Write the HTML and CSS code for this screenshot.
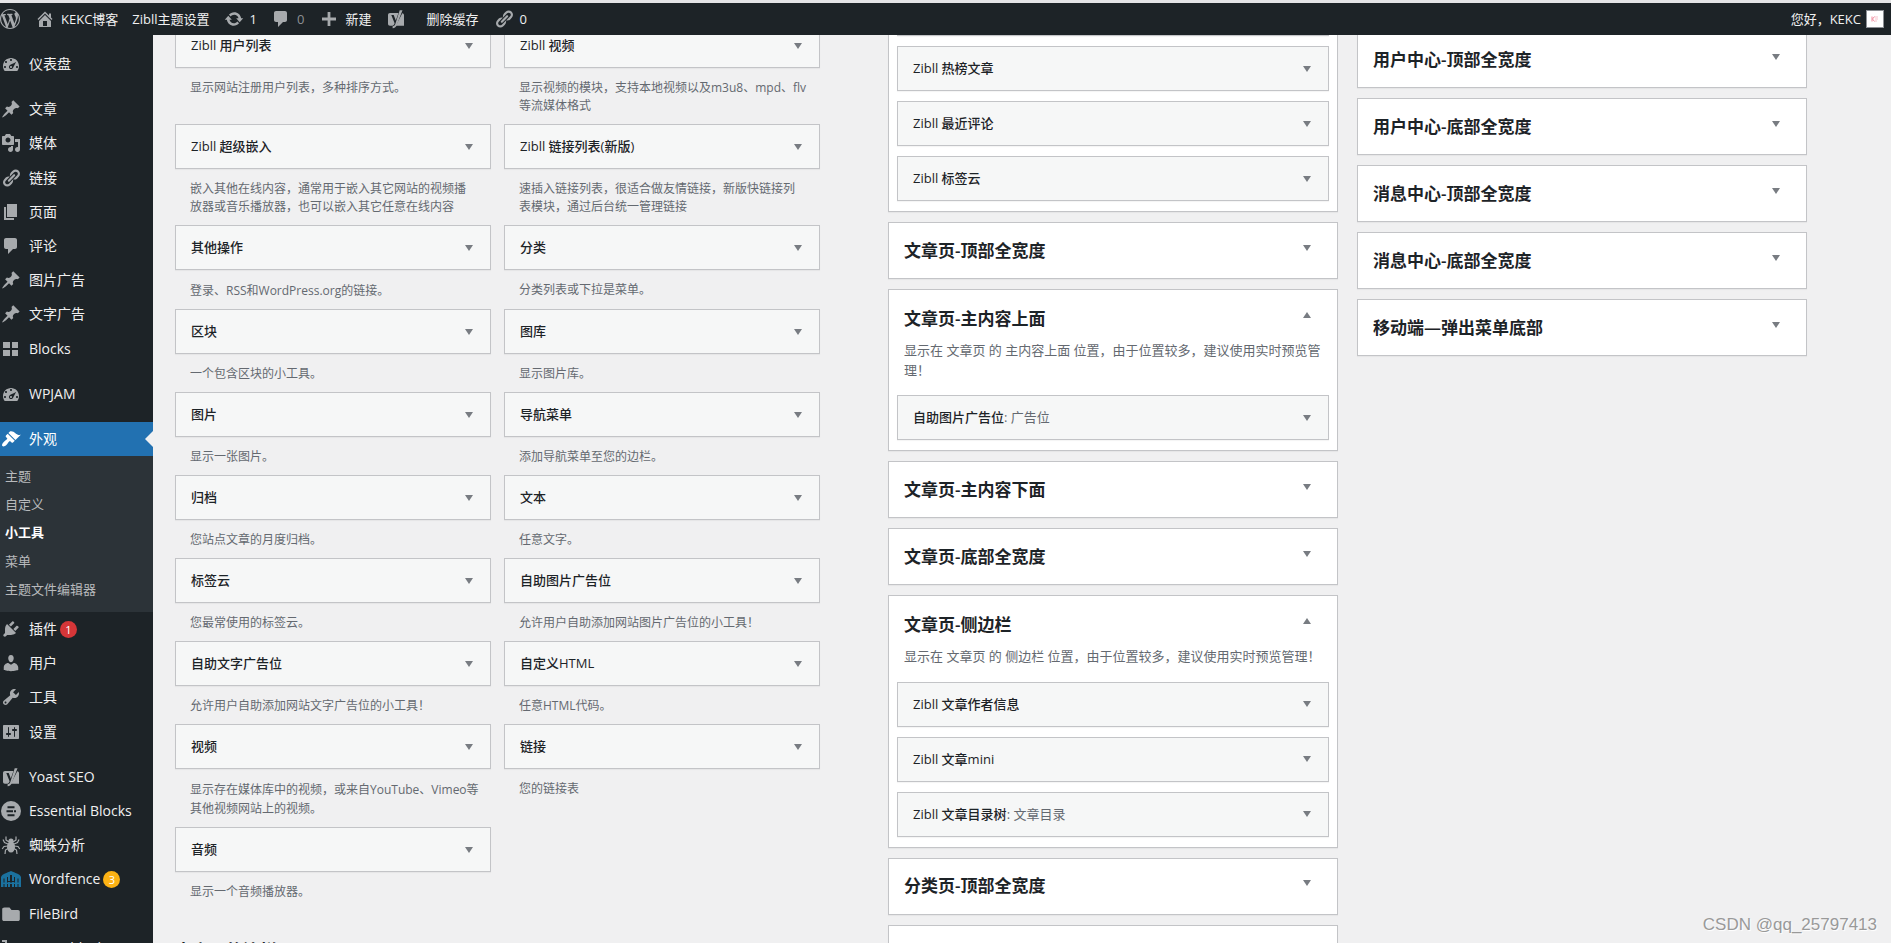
FILE: index.html
```html
<!DOCTYPE html>
<html lang="zh-CN">
<head>
<meta charset="utf-8">
<title>小工具 ‹ KEKC博客 — WordPress</title>
<link rel="stylesheet" href="styles.css">
</head>
<body>
<svg class="sprite" aria-hidden="true">
  <symbol id="i-wp" viewBox="0 0 20 20"><path d="M20 10c0-5.51-4.49-10-10-10C4.48 0 0 4.49 0 10c0 5.52 4.48 10 10 10 5.51 0 10-4.48 10-10zM7.78 15.37L4.37 6.22c.55-.02 1.17-.08 1.17-.08.5-.06.44-1.13-.06-1.11 0 0-1.45.11-2.37.11-.18 0-.37 0-.58-.01C4.12 2.69 6.87 1.11 10 1.11c2.33 0 4.45.87 6.05 2.34-.68-.11-1.65.39-1.65 1.58 0 .74.45 1.36.9 2.1.35.61.55 1.36.55 2.46 0 1.49-1.4 5-1.4 5l-3.03-8.37c.54-.02.82-.17.82-.17.5-.05.44-1.25-.06-1.22 0 0-1.44.12-2.38.12-.87 0-2.33-.12-2.33-.12-.5-.03-.56 1.2-.06 1.22l.92.08 1.26 3.41zM17.41 10c.24-.64.74-1.87.43-4.25.7 1.29 1.05 2.71 1.05 4.25 0 3.29-1.73 6.24-4.4 7.78.97-2.59 1.94-5.2 2.92-7.78zM6.1 18.09C3.12 16.65 1.11 13.53 1.11 10c0-1.3.23-2.48.72-3.59C3.25 10.3 4.67 14.2 6.1 18.09zm4.03-6.63l2.58 6.98c-.86.29-1.76.45-2.71.45-.79 0-1.57-.11-2.29-.33.81-2.38 1.62-4.74 2.42-7.1z"/></symbol>
  <symbol id="i-home" viewBox="0 0 20 20"><path d="M16 8.5l1.53 1.53-1.06 1.06L10 4.6l-6.47 6.49-1.06-1.06L10 2.5l4 4v-2h2v4zm-6-2.46l6 5.99V18H4v-5.97zM12 17v-5H8v5h4z"/></symbol>
  <symbol id="i-update" viewBox="0 0 20 20"><path d="M10.2 3.28c3.53 0 6.43 2.61 6.92 6h2.08l-3.5 4-3.5-4h2.32c-.45-1.97-2.21-3.45-4.32-3.45-1.45 0-2.73.71-3.54 1.78L4.95 5.66C6.23 4.2 8.11 3.28 10.2 3.28zm-.4 13.44c-3.52 0-6.43-2.61-6.92-6H.8l3.5-4c1.17 1.33 2.33 2.67 3.5 4H5.48c.45 1.97 2.21 3.45 4.32 3.45 1.45 0 2.73-.71 3.54-1.78l1.71 1.95c-1.28 1.46-3.15 2.38-5.25 2.38z"/></symbol>
  <symbol id="i-comment" viewBox="0 0 20 20"><path d="M5 2h9c1.1 0 2 .9 2 2v7c0 1.1-.9 2-2 2h-2l-5 5v-5H5c-1.1 0-2-.9-2-2V4c0-1.1.9-2 2-2z"/></symbol>
  <symbol id="i-plus" viewBox="0 0 20 20"><path d="M17 9v2.400h-5.600V17H8.600v-5.600H3V8.600h5.600V3h2.800v5.600H17z"/></symbol>
  <symbol id="i-yoast" viewBox="0 0 20 20"><path d="M4 4h8.500l-2.700 7.500L7.700 6H5.300l3.300 8.300c-.5 1.500-1.200 2.300-2.300 2.500H4c-1.300 0-2-.8-2-2V6c0-1.300.8-2 2-2zM16.300 4.200c1.200.2 1.700.9 1.700 2v10.600H9.600c.8-.8 1.300-1.700 1.800-3z"/><path d="M13.700 1.200h2.800L10.900 15.800c-.9 2.200-2 3.300-4.300 3.400v-1.900c1.700-.2 2.300-1 2.800-2.600z"/></symbol>
  <symbol id="i-link" viewBox="0 0 20 20"><path d="M17.740 2.760c1.680 1.690 1.680 4.410 0 6.100l-1.530 1.520c-1.120 1.120-2.700 1.470-4.140 1.090l2.620-2.610.76-.77.76-.76c.84-.84.84-2.200 0-3.040-.84-.85-2.200-.85-3.040 0l-.77.76-3.380 3.380c-.37-1.440-.02-3.020 1.100-4.140l1.520-1.530c1.690-1.680 4.420-1.680 6.100 0zM8.590 13.430l5.340-5.340c.42-.42.42-1.100 0-1.520-.44-.43-1.130-.39-1.530 0l-5.330 5.340c-.42.42-.42 1.100 0 1.520.44.430 1.130.390 1.520 0zm-.76 2.290l4.140-4.150c.38 1.440.03 3.020-1.090 4.140l-1.520 1.530c-1.690 1.680-4.410 1.680-6.100 0-1.680-1.680-1.680-4.420 0-6.100l1.530-1.520c1.120-1.120 2.700-1.470 4.140-1.100l-4.140 4.150c-.85.84-.85 2.200 0 3.050.84.84 2.200.84 3.040 0z"/></symbol>
  <symbol id="i-dash" viewBox="0 0 20 20"><path d="M3.760 17h12.480c1.100-1.370 1.760-3.110 1.760-5 0-4.420-3.580-8-8-8s-8 3.580-8 8c0 1.890.66 3.630 1.760 5zM9 6c0-.55.45-1 1-1s1 .45 1 1c0 .56-.45 1-1 1s-1-.44-1-1zM4 8c0-.55.45-1 1-1s1 .45 1 1c0 .56-.45 1-1 1s-1-.44-1-1zm4.520 3.400c.84-.83 6.510-3.500 6.510-3.500s-2.660 5.680-3.490 6.510c-.84.84-2.180.84-3.020 0-.83-.83-.83-2.180 0-3.010zM3 13c0-.55.45-1 1-1s1 .45 1 1c0 .56-.45 1-1 1s-1-.44-1-1zm6 0c0 .56.45 1 1 1 .56 0 1-.44 1-1 0-.55-.44-1-1-1-.55 0-1 .45-1 1zm6 0c0-.55.45-1 1-1s1 .45 1 1c0 .56-.45 1-1 1s-1-.44-1-1z"/></symbol>
  <symbol id="i-pin" viewBox="0 0 20 20"><path d="M10.440 3.020l1.820-1.820 6.360 6.350-1.830 1.820c-1.050-.68-2.480-.57-3.410.36l-.75.75c-.92.93-1.040 2.350-.35 3.410l-1.830 1.820-2.410-2.410-2.800 2.790c-.42.420-3.380 2.710-3.800 2.290s1.860-3.390 2.280-3.810l2.790-2.790L4.100 9.360l1.830-1.820c1.050.69 2.480.57 3.400-.36l.75-.75c.93-.92 1.050-2.350.36-3.410z"/></symbol>
  <symbol id="i-media" viewBox="0 0 20 20"><path d="M13 11V4c0-.55-.45-1-1-1h-1.670L9 1H5L3.670 3H2c-.55 0-1 .45-1 1v7c0 .55.450 1 1 1h10c.55 0 1-.45 1-1zM7 4.500c1.380 0 2.500 1.120 2.500 2.500S8.380 9.500 7 9.500 4.500 8.380 4.500 7 5.620 4.500 7 4.500zM14 6h5v10.500c0 1.380-1.120 2.500-2.500 2.500S14 17.880 14 16.500s1.120-2.500 2.500-2.500c.17 0 .34.020.5.050V9h-3V6zm-4 8.050V13h2v3.500c0 1.380-1.120 2.500-2.500 2.500S7 17.880 7 16.500 8.120 14 9.500 14c.17 0 .34.020.5.050z"/></symbol>
  <symbol id="i-page" viewBox="0 0 20 20"><path d="M6 2h10v13H6z"/><path d="M3 5h2v11h8v2H3z"/></symbol>
  <symbol id="i-grid" viewBox="0 0 20 20"><path d="M2 3h7v6H2zM11 3h6v6h-6zM2 11h7v6H2zM11 11h6v6h-6z"/></symbol>
  <symbol id="i-brush" viewBox="0 0 20 20"><path d="M14.480 11.060L7.410 3.990l1.500-1.500c.5-.56 2.300-.47 3.510.32 1.210.8 1.430 1.280 2.910 2.100 1.180.64 2.450 1.260 4.450.85zm-.71.71L6.700 4.700 4.930 6.470c-.39.39-.39 1.020 0 1.410l1.060 1.060c.39.39.39 1.030 0 1.420-.6.600-1.430 1.110-2.210 1.690-.35.26-.7.530-1.010.84C1.430 14.230.4 16.080 1.400 17.070c.99 1 2.840-.03 4.180-1.360.31-.31.58-.66.85-1.020.57-.78 1.080-1.610 1.690-2.210.39-.39 1.020-.39 1.410 0l1.060 1.060c.39.39 1.020.39 1.410 0z"/></symbol>
  <symbol id="i-plug" viewBox="0 0 20 20"><path d="M13.110 4.360L9.870 7.600 8 5.730l3.240-3.240c.35-.34 1.050-.2 1.560.32.52.51.66 1.210.31 1.550zm-8 1.770l.91-1.120 9.010 9.010-1.190.84c-.71.71-2.630 1.160-3.820 1.160H6.140L4.900 17.260c-.59.59-1.540.59-2.120 0-.59-.58-.59-1.530 0-2.120l1.240-1.240v-3.880c0-1.130.4-3.190 1.090-3.890zm7.260 3.970l3.240-3.240c.34-.35 1.040-.21 1.550.31.52.51.66 1.210.31 1.550l-3.240 3.250z"/></symbol>
  <symbol id="i-user" viewBox="0 0 20 20"><path d="M10 9.250c-2.270 0-2.730-3.440-2.730-3.440C7 4.020 7.820 2 9.970 2c2.160 0 2.980 2.020 2.710 3.810 0 0-.41 3.440-2.680 3.440zm0 2.570L12.720 10c2.390 0 4.520 2.330 4.520 4.530v2.490s-3.650 1.130-7.240 1.130c-3.650 0-7.240-1.130-7.240-1.130v-2.490c0-2.250 1.940-4.480 4.470-4.480z"/></symbol>
  <symbol id="i-tool" viewBox="0 0 20 20"><path d="M16.680 9.770c-1.340 1.340-3.300 1.670-4.950.99l-5.410 6.520c-.99.99-2.590.99-3.580 0s-.99-2.590 0-3.570l6.520-5.420c-.68-1.650-.35-3.610.99-4.950 1.280-1.280 3.120-1.620 4.720-1.060l-2.890 2.890 2.820 2.820 2.860-2.870c.53 1.580.18 3.390-1.080 4.650zM3.810 16.210c.4.39 1.040.39 1.430 0 .4-.4.4-1.040 0-1.430-.39-.4-1.030-.4-1.430 0-.39.39-.39 1.030 0 1.430z"/></symbol>
  <symbol id="i-set" viewBox="0 0 20 20"><path d="M18 16V4c0-.55-.45-1-1-1H3c-.55 0-1 .45-1 1v12c0 .55.450 1 1 1h14c.55 0 1-.45 1-1zM8 11h1c.55 0 1 .45 1 1s-.45 1-1 1H8v1.500c0 .28-.22.500-.5.500s-.5-.22-.5-.5V13H6c-.55 0-1-.45-1-1s.45-1 1-1h1V5.500c0-.28.22-.5.5-.5s.5.22.5.5V11zm5-2h-1c-.55 0-1-.45-1-1s.45-1 1-1h1V5.500c0-.28.22-.5.5-.5s.5.22.5.5V7h1c.55 0 1 .45 1 1s-.45 1-1 1h-1v5.500c0 .28-.22.500-.5.500s-.5-.22-.5-.5V9z"/></symbol>
  <symbol id="i-eb" viewBox="0 0 20 20"><circle cx="10" cy="10" r="10"/><path class="cut" d="M6.500 5.200h7v2h-7zM5.500 9.200h6.500v2H5.500zM13 9.200h2v2h-2zM6.500 13.200h7v2h-7z"/></symbol>
  <symbol id="i-spider" viewBox="0 0 20 20"><ellipse cx="10" cy="12" rx="4" ry="5.500"/><circle cx="10" cy="6" r="2.600"/><path class="line" d="M8 7L5 5V1.500M12 7l3-2V1.500M7 9L3.500 7.500 2 4.500M13 9l3.500-1.500L18 4.500M7 11l-4 .5L1.200 14M13 11l4 .5 1.800 2.500M7 13.500L4.500 15 4 19M13 13.500l2.500 1.500.5 4"/></symbol>
  <symbol id="i-fence" viewBox="0 0 20 20"><path d="M0 8C1 5.500 3 5 4 4.500 6 3.800 7.500 3 10 2c2.500 1 4 1.800 6 2.500 1 .5 3 1 4 3.500v10h-2.500V9.500h-1V18H14V8h-1v4h-2V6H9v6H7V8H6v10H3.500V9.500h-1V18H0z"/><path d="M0 13.500h20v1.400H0zM7 13h2v5H7zM11 13h2v5h-2z"/></symbol>
  <symbol id="i-folder" viewBox="0 0 20 20"><path d="M3.500 3.500h5L10.500 6H17c1.100 0 1.800.7 1.800 1.800v7.400c0 1.100-.7 1.800-1.800 1.800H3c-1.100 0-1.800-.7-1.800-1.800V5.300c0-1.100.8-1.800 2.300-1.800z"/></symbol>
  <symbol id="i-corner" viewBox="0 0 20 20"><path d="M1 2h5v14h12v2H4V4H1z"/></symbol>
</svg>

<header class="adminbar">
  <nav class="adminbar-left" aria-label="工具栏">
    <a href="#" class="ab-logo" aria-label="关于WordPress"><svg class="icon"><use href="#i-wp"/></svg></a>
    <a href="#" class="ab-item ab-site"><svg class="icon"><use href="#i-home"/></svg>KEKC博客</a>
    <a href="#" class="ab-item ab-theme">Zibll主题设置</a>
    <a href="#" class="ab-item ab-update"><svg class="icon"><use href="#i-update"/></svg>1</a>
    <a href="#" class="ab-item ab-comments"><svg class="icon"><use href="#i-comment"/></svg><span class="muted">0</span></a>
    <a href="#" class="ab-item ab-new"><svg class="icon"><use href="#i-plus"/></svg>新建</a>
    <a href="#" class="ab-yoast" aria-label="Yoast SEO"><svg class="icon"><use href="#i-yoast"/></svg></a>
    <a href="#" class="ab-item ab-cache">删除缓存</a>
    <a href="#" class="ab-item ab-links"><svg class="icon"><use href="#i-link"/></svg>0</a>
  </nav>
  <a href="#" class="ab-account">您好，KEKC
    <svg class="avatar" viewBox="0 0 18 18"><rect x=".5" y=".5" width="17" height="17" fill="#fff" stroke="#8c8f94"/><path d="M6 6.500v5M6.500 9l2-2.500M6.500 9l2 2.500" stroke="#f08a9c" fill="none"/><path d="M8.500 7H12M9 9h3M9 11h2" stroke="#f7c3cc"/></svg>
  </a>
</header>

<div class="shell">
  <nav class="menu" aria-label="主菜单">
    <a href="#" class="menu-item"><svg class="icon"><use href="#i-dash"/></svg>仪表盘</a>
    <hr class="sep">
    <a href="#" class="menu-item"><svg class="icon"><use href="#i-pin"/></svg>文章</a>
    <a href="#" class="menu-item"><svg class="icon"><use href="#i-media"/></svg>媒体</a>
    <a href="#" class="menu-item"><svg class="icon"><use href="#i-link"/></svg>链接</a>
    <a href="#" class="menu-item"><svg class="icon"><use href="#i-page"/></svg>页面</a>
    <a href="#" class="menu-item"><svg class="icon"><use href="#i-comment"/></svg>评论</a>
    <a href="#" class="menu-item"><svg class="icon"><use href="#i-pin"/></svg>图片广告</a>
    <a href="#" class="menu-item"><svg class="icon"><use href="#i-pin"/></svg>文字广告</a>
    <a href="#" class="menu-item"><svg class="icon"><use href="#i-grid"/></svg>Blocks</a>
    <hr class="sep">
    <a href="#" class="menu-item"><svg class="icon"><use href="#i-dash"/></svg>WPJAM</a>
    <hr class="sep">
    <a href="#" class="menu-item current"><svg class="icon"><use href="#i-brush"/></svg>外观</a>
    <div class="submenu">
      <a href="#">主题</a>
      <a href="#">自定义</a>
      <a href="#" class="active" aria-current="page">小工具</a>
      <a href="#">菜单</a>
      <a href="#">主题文件编辑器</a>
    </div>
    <a href="#" class="menu-item"><svg class="icon"><use href="#i-plug"/></svg>插件<span class="badge badge-red">1</span></a>
    <a href="#" class="menu-item"><svg class="icon"><use href="#i-user"/></svg>用户</a>
    <a href="#" class="menu-item"><svg class="icon"><use href="#i-tool"/></svg>工具</a>
    <a href="#" class="menu-item"><svg class="icon"><use href="#i-set"/></svg>设置</a>
    <hr class="sep">
    <a href="#" class="menu-item"><svg class="icon"><use href="#i-yoast"/></svg>Yoast SEO</a>
    <a href="#" class="menu-item"><svg class="icon icon-eb"><use href="#i-eb"/></svg>Essential Blocks</a>
    <a href="#" class="menu-item"><svg class="icon"><use href="#i-spider"/></svg>蜘蛛分析</a>
    <a href="#" class="menu-item"><svg class="icon icon-blue"><use href="#i-fence"/></svg>Wordfence<span class="badge badge-amber">3</span></a>
    <a href="#" class="menu-item"><svg class="icon"><use href="#i-folder"/></svg>FileBird</a>
    <a href="#" class="menu-item"><svg class="icon"><use href="#i-corner"/></svg>Menu block</a>
  </nav>

  <main class="content">
    <section class="available">
      <div class="available-grid">
        <div><button class="widget">Zibll 用户列表</button><p class="desc">显示网站注册用户列表，多种排序方式。</p></div>
        <div><button class="widget">Zibll 视频</button><p class="desc desc-wide">显示视频的模块，支持本地视频以及m3u8、mpd、flv等流媒体格式</p></div>
        <div><button class="widget">Zibll 超级嵌入</button><p class="desc">嵌入其他在线内容，通常用于嵌入其它网站的视频播放器或音乐播放器，也可以嵌入其它任意在线内容</p></div>
        <div><button class="widget">Zibll 链接列表(新版)</button><p class="desc">速插入链接列表，很适合做友情链接，新版快链接列表模块，通过后台统一管理链接</p></div>
        <div><button class="widget">其他操作</button><p class="desc desc-tall">登录、RSS和WordPress.org的链接。</p></div>
        <div><button class="widget">分类</button><p class="desc">分类列表或下拉是菜单。</p></div>
        <div><button class="widget">区块</button><p class="desc">一个包含区块的小工具。</p></div>
        <div><button class="widget">图库</button><p class="desc">显示图片库。</p></div>
        <div><button class="widget">图片</button><p class="desc">显示一张图片。</p></div>
        <div><button class="widget">导航菜单</button><p class="desc">添加导航菜单至您的边栏。</p></div>
        <div><button class="widget">归档</button><p class="desc">您站点文章的月度归档。</p></div>
        <div><button class="widget">文本</button><p class="desc">任意文字。</p></div>
        <div><button class="widget">标签云</button><p class="desc">您最常使用的标签云。</p></div>
        <div><button class="widget">自助图片广告位</button><p class="desc">允许用户自助添加网站图片广告位的小工具！</p></div>
        <div><button class="widget">自助文字广告位</button><p class="desc">允许用户自助添加网站文字广告位的小工具！</p></div>
        <div><button class="widget">自定义HTML</button><p class="desc">任意HTML代码。</p></div>
        <div><button class="widget">视频</button><p class="desc desc-tall desc-wide">显示存在媒体库中的视频，或来自YouTube、Vimeo等其他视频网站上的视频。</p></div>
        <div><button class="widget">链接</button><p class="desc">您的链接表</p></div>
        <div><button class="widget">音频</button><p class="desc">显示一个音频播放器。</p></div>
      </div>
      <h2 class="inactive-title">未启用的边栏</h2>
    </section>

    <div class="areas">
      <div class="column column-mid">
        <section class="area">
          <div class="area-widgets">
            <div class="widget"></div>
            <button class="widget">Zibll 热榜文章</button>
            <button class="widget">Zibll 最近评论</button>
            <button class="widget">Zibll 标签云</button>
          </div>
        </section>
        <section class="area"><button class="area-title">文章页-顶部全宽度</button></section>
        <section class="area">
          <button class="area-title open">文章页-主内容上面</button>
          <p class="area-desc">显示在 文章页 的 主内容上面 位置，由于位置较多，建议使用实时预览管理！</p>
          <div class="area-widgets">
            <button class="widget">自助图片广告位<span class="instance">: 广告位</span></button>
          </div>
        </section>
        <section class="area"><button class="area-title">文章页-主内容下面</button></section>
        <section class="area"><button class="area-title">文章页-底部全宽度</button></section>
        <section class="area">
          <button class="area-title open">文章页-侧边栏</button>
          <p class="area-desc">显示在 文章页 的 侧边栏 位置，由于位置较多，建议使用实时预览管理！</p>
          <div class="area-widgets">
            <button class="widget">Zibll 文章作者信息</button>
            <button class="widget">Zibll 文章mini</button>
            <button class="widget">Zibll 文章目录树<span class="instance">: 文章目录</span></button>
          </div>
        </section>
        <section class="area"><button class="area-title">分类页-顶部全宽度</button></section>
        <section class="area area-last"></section>
      </div>
      <div class="column column-right">
        <section class="area"><button class="area-title">用户中心-顶部全宽度</button></section>
        <section class="area"><button class="area-title">用户中心-底部全宽度</button></section>
        <section class="area"><button class="area-title">消息中心-顶部全宽度</button></section>
        <section class="area"><button class="area-title">消息中心-底部全宽度</button></section>
        <section class="area"><button class="area-title">移动端—弹出菜单底部</button></section>
      </div>
    </div>
  </main>
</div>
<div class="watermark">CSDN @qq_25797413</div>
</body>
</html>
```
FILE: styles.css
```css
* { box-sizing: border-box; }

body {
  margin: 0;
  height: 100vh;
  display: flex;
  flex-direction: column;
  overflow: hidden;
  background: #f0f0f1;
  color: #1d2327;
  font: 13px/1.4 "Open Sans", "Noto Sans CJK SC", sans-serif;
}

a { color: inherit; text-decoration: none; }
button { font: inherit; color: inherit; text-align: left; cursor: pointer; }
.sprite { position: absolute; width: 0; height: 0; }

.icon {
  width: 20px;
  height: 20px;
  flex: none;
  fill: #a7aaad;
}
.cut { fill: #1d2327; }
.line { fill: none; stroke: #a7aaad; stroke-width: 1.2; }

/* Toolbar */
.adminbar {
  flex: none;
  height: 35px;
  border-top: 3px solid #e4e4e6;
  background: #1d2327;
  color: #f0f0f1;
  display: flex;
  justify-content: space-between;
  align-items: center;
  padding-right: 7px;
  position: relative;
  z-index: 2;
}
.adminbar-left { display: flex; align-items: center; }
.ab-item { display: flex; align-items: center; gap: 6px; white-space: nowrap; }
.ab-logo, .ab-yoast { display: flex; }
.ab-site { margin-left: 15px; }
.ab-theme { margin-left: 14px; }
.ab-update { margin-left: 14px; }
.ab-comments { margin-left: 14px; }
.ab-new { margin-left: 15px; }
.ab-yoast { margin-left: 15px; }
.ab-cache { margin-left: 20px; }
.ab-links { margin-left: 15px; }
.muted { color: #8c8f94; }
.ab-account { display: flex; align-items: center; gap: 5px; }
.avatar { width: 18px; height: 18px; }

.shell { flex: 1; min-height: 0; display: flex; }

/* Side menu */
.menu {
  flex: none;
  width: 153px;
  padding-top: 12px;
  background: #1d2327;
  color: #f0f0f1;
  overflow: hidden;
}
.menu-item {
  display: flex;
  align-items: center;
  gap: 8px;
  padding: 8px 0 8px 1px;
  font-size: 14px;
  line-height: 1.3;
  white-space: nowrap;
  position: relative;
}
.menu-item .icon { margin: -1px 0; }
.sep { height: 11px; margin: 0; border: 0; }
.current { background: #2271b1; color: #fff; }
.current .icon { fill: #fff; }
.current::after {
  content: "";
  position: absolute;
  right: 0;
  top: 50%;
  margin-top: -8px;
  border: 8px solid transparent;
  border-left-width: 0;
  border-right-color: #f0f0f1;
}
.icon-blue { fill: #1b719e; }
.badge {
  width: 17px;
  height: 17px;
  margin: 0 0 0 -5px;
  border-radius: 50%;
  color: #fff;
  font-size: 11px;
  line-height: 17px;
  text-align: center;
}
.badge-red { background: #d63638; }
.badge-amber { background: #fcb214; }
.submenu {
  padding: 6px 0 9px;
  background: #2c3338;
  color: #b8babc;
}
.submenu a { display: block; padding: 5px; }
.submenu .active { color: #fff; font-weight: 700; }

/* Widgets screen */
.content {
  flex: 1;
  min-width: 0;
  display: grid;
  grid-template-columns: 645fr 919fr;
  column-gap: 68px;
  padding: 0 84px 0 22px;
  overflow: hidden;
}
.available { margin-top: -12px; }
.available-grid { display: grid; grid-template-columns: 1fr 1fr; column-gap: 13px; }

.widget {
  display: flex;
  align-items: center;
  width: 100%;
  height: 45px;
  padding: 0 17px 0 15px;
  border: 1px solid #c3c4c7;
  background: #f6f7f7;
  box-shadow: 0 1px 1px rgba(0, 0, 0, .04);
  font-weight: 500;
  white-space: pre;
}
.widget::after, .area-title::after {
  content: "";
  margin-left: auto;
  border: 4px solid transparent;
  border-top: 6px solid #787c82;
  border-bottom-width: 0;
}
.instance { color: #646970; font-weight: 400; }

.desc {
  margin: 0;
  padding: 11px 14px 9px 15px;
  color: #646970;
  font-size: 12px;
  line-height: 18px;
}
.desc-tall { line-height: 19px; }
.desc-wide { padding-right: 8px; }
.inactive-title { margin: 29px 0 0; font-size: 17px; line-height: 24px; font-weight: 700; }

.areas { display: grid; grid-template-columns: 1fr 1fr; column-gap: 19px; align-items: start; }
.column { display: flex; flex-direction: column; gap: 10px; }
.column-mid { margin-top: -45px; }
.column-right { margin-top: -4px; }
.area {
  border: 1px solid #c3c4c7;
  background: #fff;
  box-shadow: 0 1px 1px rgba(0, 0, 0, .04);
}
.area-last { height: 57px; }
.area-title {
  display: flex;
  align-items: center;
  width: 100%;
  height: 55px;
  padding: 0 26px 0 15px;
  border: 0;
  background: none;
  font-size: 17px;
  font-weight: 600;
}
.area-title::after { margin-bottom: 6px; }
.area-title.open { height: 51px; padding-top: 6px; }
.area-title.open::after {
  border-top-width: 0;
  border-bottom: 6px solid #787c82;
  margin-bottom: 8px;
}
.area-desc { margin: 0 15px 15px; color: #646970; line-height: 1.5; }
.area-widgets { display: flex; flex-direction: column; gap: 10px; padding: 0 8px 10px; }

.watermark {
  position: absolute;
  right: 14px;
  bottom: 6px;
  z-index: 3;
  color: #999;
  font: 17px/24px "Liberation Sans", sans-serif;
  text-shadow: 1px 1px 1px #fff;
}
```
